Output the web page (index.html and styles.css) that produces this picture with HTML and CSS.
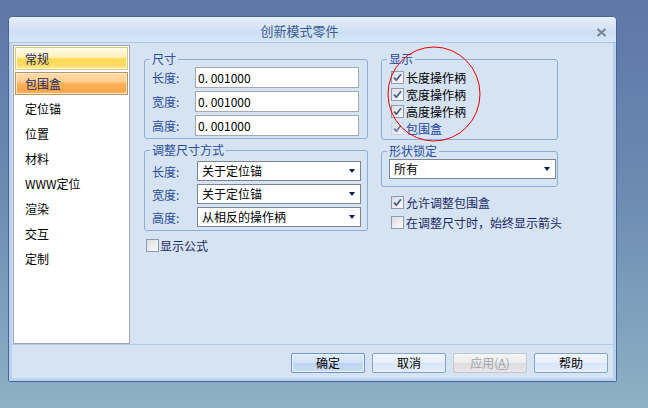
FILE: index.html
```html
<!DOCTYPE html>
<html lang="zh-CN">
<head>
    <meta charset="UTF-8">
    <title>创新模式零件</title>
    <link rel="stylesheet" href="styles.css">
</head>
<body>
    <div class="desktop">
        <div class="dialog">
            <div class="titlebar">
                <span class="title">创新模式零件</span>
                <svg class="close" width="11" height="9" viewBox="0 0 11 9">
                    <path d="M1.5 1 L9.5 8 M9.5 1 L1.5 8" stroke="#7b8699" stroke-width="2.2" fill="none"/>
                </svg>
            </div>
            <div class="body">
                <div class="content">
                    <ul class="nav">
                        <li class="nav-item hover">常规</li>
                        <li class="nav-item active">包围盒</li>
                        <li class="nav-item">定位锚</li>
                        <li class="nav-item">位置</li>
                        <li class="nav-item">材料</li>
                        <li class="nav-item">WWW定位</li>
                        <li class="nav-item">渲染</li>
                        <li class="nav-item">交互</li>
                        <li class="nav-item">定制</li>
                    </ul>

                    <div class="panel">
                        <div class="col col-left">
                            <fieldset class="group group-size">
                                <legend>尺寸</legend>
                                <div class="field"><label>长度:</label><div class="input">0. 001000</div></div>
                                <div class="field"><label>宽度:</label><div class="input">0. 001000</div></div>
                                <div class="field"><label>高度:</label><div class="input">0. 001000</div></div>
                            </fieldset>

                            <fieldset class="group group-mode">
                                <legend>调整尺寸方式</legend>
                                <div class="field"><label>长度:</label><div class="select">关于定位锚<span class="arrow"></span></div></div>
                                <div class="field"><label>宽度:</label><div class="select">关于定位锚<span class="arrow"></span></div></div>
                                <div class="field"><label>高度:</label><div class="select">从相反的操作柄<span class="arrow"></span></div></div>
                            </fieldset>

                            <div class="check check-formula">
                                <span class="box"></span><span class="check-text">显示公式</span>
                            </div>
                        </div>

                        <div class="col col-right">
                            <fieldset class="group group-show">
                                <legend>显示</legend>
                                <div class="check"><span class="box checked"></span><span>长度操作柄</span></div>
                                <div class="check"><span class="box checked"></span><span>宽度操作柄</span></div>
                                <div class="check"><span class="box checked"></span><span>高度操作柄</span></div>
                                <div class="check"><span class="box checked faint"></span><span class="link-text">包围盒</span></div>
                            </fieldset>

                            <fieldset class="group group-lock">
                                <legend>形状锁定</legend>
                                <div class="select">所有<span class="arrow"></span></div>
                            </fieldset>

                            <div class="options">
                                <div class="check"><span class="box checked"></span><span class="check-text">允许调整包围盒</span></div>
                                <div class="check"><span class="box"></span><span class="check-text">在调整尺寸时，始终显示箭头</span></div>
                            </div>
                        </div>
                    </div>
                </div>

                <div class="footer">
                    <button class="btn btn-default">确定</button>
                    <button class="btn">取消</button>
                    <button class="btn btn-disabled">应用(<u>A</u>)</button>
                    <button class="btn">帮助</button>
                </div>
            </div>
        </div>

        <!-- red annotation circle drawn over the dialog -->
        <svg class="mark" width="648" height="408" viewBox="0 0 648 408">
            <ellipse cx="434" cy="94" rx="46" ry="47" fill="none" stroke="#f00000" stroke-width="1"/>
        </svg>
    </div>
</body>
</html>
```

FILE: styles.css
```css
* { box-sizing: border-box; }
html, body { margin: 0; padding: 0; }
body { font-family: "Noto Sans CJK SC", "Liberation Sans", sans-serif; font-size: 12px; color: #000; }

.desktop { position: relative; width: 648px; height: 408px; padding: 16px 0 0 8px; background: linear-gradient(180deg, #5e77a7 0%, #6b89b1 45%, #8db1c5 100%); overflow: hidden; }
.mark { position: absolute; left: 0; top: 0; pointer-events: none; }

.dialog { width: 609px; height: 366px; border: 1px solid #46659a; border-radius: 5px 5px 2px 2px; display: flex; flex-direction: column; background: #d5e3f3; overflow: hidden; }

.titlebar { height: 26px; flex: none; display: flex; align-items: flex-start; padding-top: 5px; border-bottom: 1px solid #a9c7ec; background: linear-gradient(180deg, #e7f0fb 0%, #d9e6f7 35%, #cddff5 65%, #d8e6f7 100%); }
.title { flex: 1; text-align: center; padding-right: 6px; line-height: 18px; font-size: 13px; color: #3d5b8e; }
.close { margin: 6px 9px 0 0; }

.body { flex: 1; display: flex; flex-direction: column; border: 3px solid #bad1ef; border-top: none; }

.content { height: 302px; flex: none; display: flex; padding: 2px 0 0 1px; border-bottom: 1px solid #b1c9ea; }

.nav { list-style: none; margin: 0; padding: 1px 0 0; width: 117px; height: 299px; background: #fff; border: 1px solid #9ea7b2; }
.nav-item { height: 23px; margin: 0 1px 2px; padding-left: 9px; border: 1px solid transparent; line-height: 21px; color: #000; }
.nav-item.hover { border-color: #e2c66c; color: #1c2a63; box-shadow: inset 0 0 0 1px #fffaf0; background: linear-gradient(180deg, #fffbe8 0%, #fff2bd 42%, #ffd850 55%, #ffdc6a 85%, #ffe9a8 100%); }
.nav-item.active { border-color: #b59768; color: #1c2a63; box-shadow: inset 0 0 0 1px #ffe6c4; background: linear-gradient(180deg, #ffdcae 0%, #ffcd8e 40%, #fbb057 55%, #fba64a 85%, #fdbd72 100%); }

.panel { flex: 1; display: flex; gap: 13px; padding: 7px 0 0 14px; }
.col { display: flex; flex-direction: column; }
.col-left { width: 224px; }
.col-right { width: 177px; }

.group { margin: 0; border: 1px solid #8dadd7; border-radius: 3px; min-width: 0; }
.group legend { padding: 0 2px; line-height: 14px; color: #2a4c9a; }

.group-size { padding: 1px 8px 2px 7px; }
.group-size legend { margin-left: -2px; }
.group-mode { margin-top: 4px; padding: 4px 6px 3px 7px; }
.group-mode legend { margin-left: -2px; }
.group-show { padding: 3px 8px 2px 9px; }
.group-show legend { margin-left: -4px; }
.group-lock { margin-top: 4px; padding: 1px 1px 7px 7px; }
.group-lock legend { margin-left: -2px; }

.field { display: flex; align-items: center; }
.field + .field { margin-top: 3px; }
.field label { flex: none; color: #2a4c9a; }
.group-size .field label { width: 43px; }
.group-mode .field label { width: 45px; }

.input { flex: 1; height: 21px; border: 1px solid #a2a9b2; background: #fff; padding-left: 2px; line-height: 19px; }
.select { flex: 1; position: relative; height: 20px; border: 1px solid #7b8595; background: #fff; padding-left: 4px; line-height: 18px; }
.arrow { position: absolute; right: 5px; top: 7px; width: 0; height: 0; border-left: 3.5px solid transparent; border-right: 3.5px solid transparent; border-top: 4px solid #0c1d5a; }

.check { display: flex; align-items: center; height: 17px; gap: 2px; white-space: nowrap; }
.box { flex: none; width: 13px; height: 13px; border: 1px solid #8f9cb0; background: linear-gradient(135deg, #d9dbde 0%, #eeeff1 55%, #fbfbfb 100%); }
.box.checked { background-image: url("data:image/svg+xml,%3Csvg xmlns='http://www.w3.org/2000/svg' width='11' height='11'%3E%3Cpath d='M2 5.5 L4.3 8.2 L9 2.2' stroke='%234a5c92' stroke-width='1.8' fill='none'/%3E%3C/svg%3E"), linear-gradient(135deg, #d9dbde 0%, #eeeff1 55%, #fbfbfb 100%); background-repeat: no-repeat; }
.box.faint { border-color: #c3cfdf; opacity: 0.75; }
.link-text { color: #1f44a0; }
.check-text { color: #1c2a63; }

.check-formula { margin-top: 6px; padding-left: 2px; gap: 1px; }
.options { margin-top: 5px; padding-left: 10px; }
.options .check { height: 20px; }

.footer { flex: 1; display: flex; justify-content: flex-end; align-items: flex-start; gap: 7px; padding: 8px 5px 0 0; }
.btn { width: 74px; height: 20px; padding: 0; border: 1px solid #84a3cf; border-radius: 2px; font-family: inherit; font-size: 12px; line-height: 18px; color: #000; background: linear-gradient(180deg, #f0f5fc 0%, #e6eefa 50%, #d9e6f8 51%, #e4edfa 100%); }
.btn-default { border-color: #6f93c6; background: linear-gradient(180deg, #e0ebfa 0%, #d3e3f7 48%, #bcd3f1 52%, #cbdcf4 100%); box-shadow: inset 0 0 0 1px #eaf2fc; }
.btn-disabled { border-color: #c4c8cd; color: #a4a7ab; background: linear-gradient(180deg, #f4f4f4 0%, #ececec 50%, #dddddd 51%, #e6e6e6 100%); }
```
